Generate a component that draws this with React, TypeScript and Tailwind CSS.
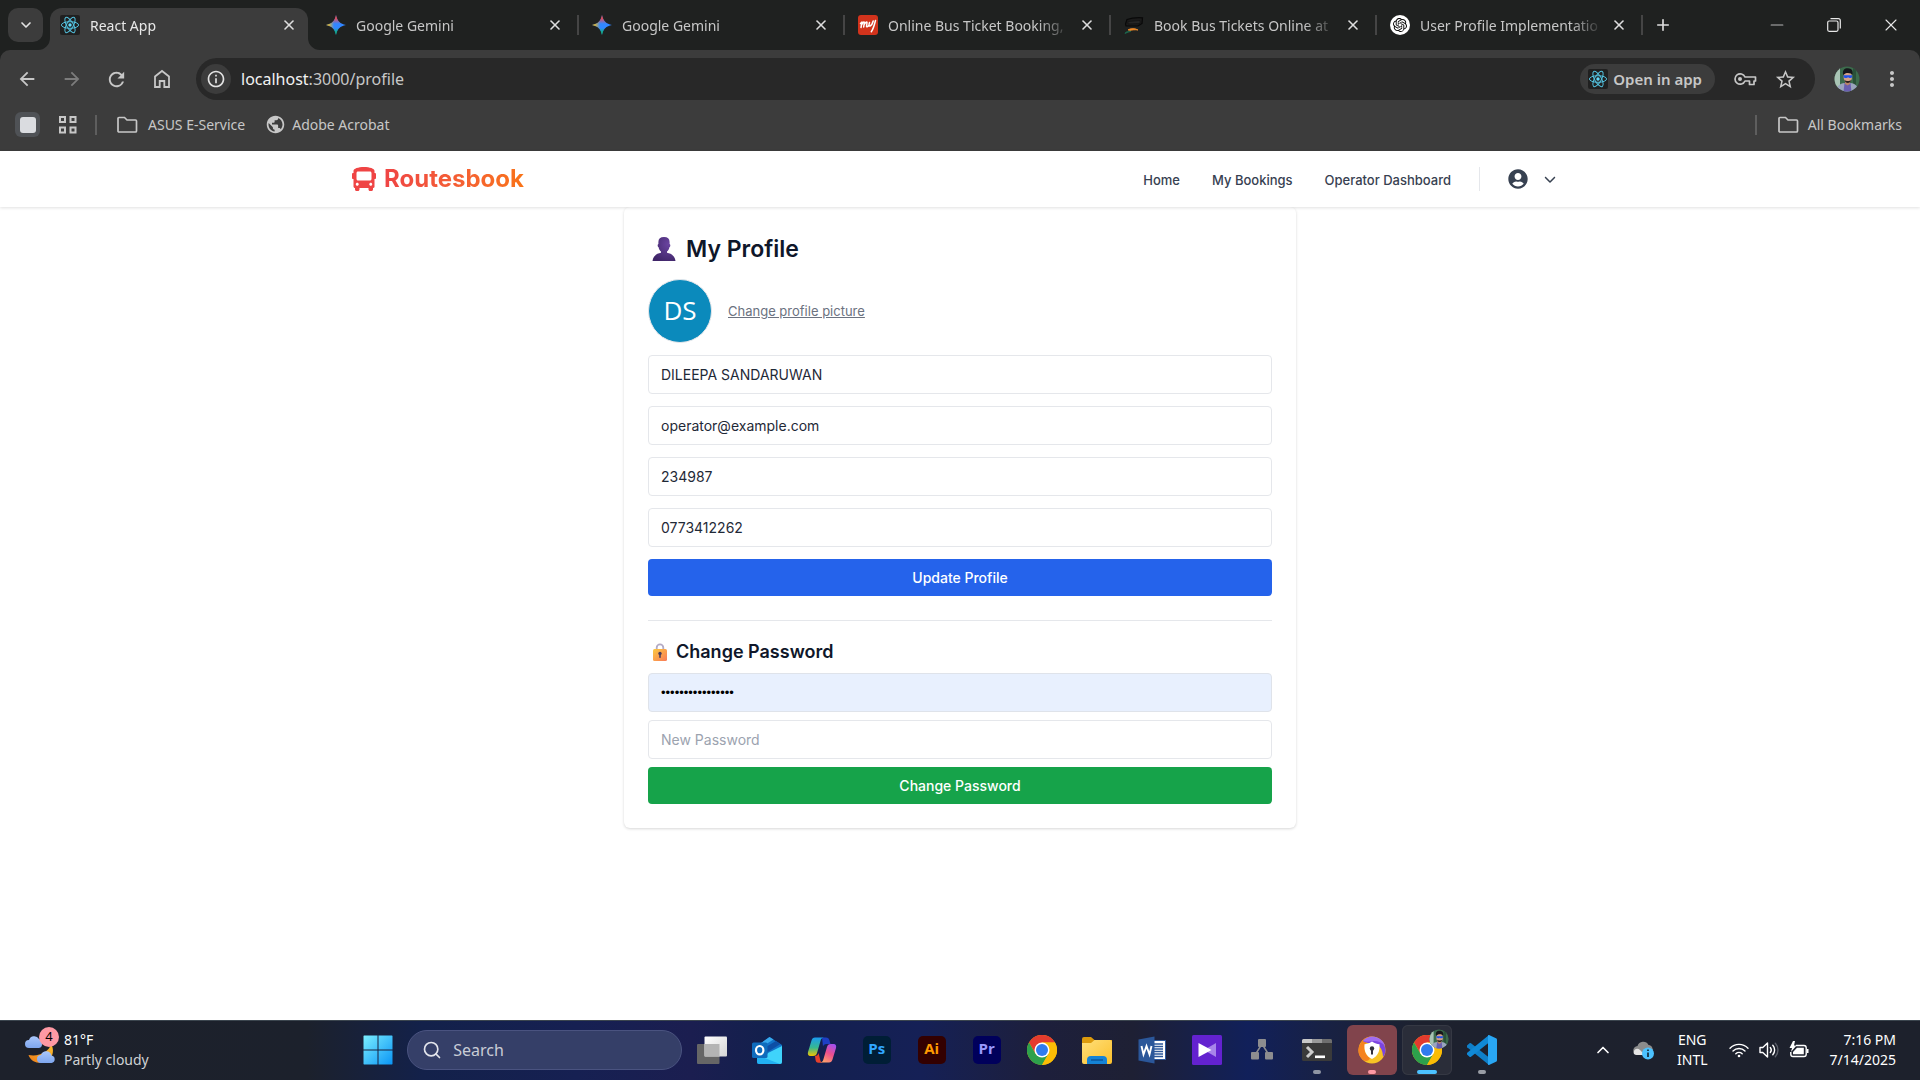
import React, { useState } from "react";
import { Minus, X, Plus, ChevronDown, ChevronUp, Search } from "lucide-react";
import { FaBus, FaUserCircle } from "react-icons/fa";
import { FaChevronDown } from "react-icons/fa6";
import { SiOpenai } from "react-icons/si";
import { MdArrowBack, MdArrowForward, MdRefresh, MdInfoOutline, MdStarOutline, MdMoreVert, MdPublic } from "react-icons/md";

/* ---------- favicons ---------- */

function ReactMark() {
  return (
    <svg viewBox="0 0 20 20" className="size-5 shrink-0" aria-hidden="true">
      <rect width="20" height="20" rx="2" fill="#202020" />
      <g fill="none" stroke="#53c1de" strokeWidth="1">
        <ellipse cx="10" cy="10" rx="8.6" ry="3.3" />
        <ellipse cx="10" cy="10" rx="8.6" ry="3.3" transform="rotate(60 10 10)" />
        <ellipse cx="10" cy="10" rx="8.6" ry="3.3" transform="rotate(120 10 10)" />
      </g>
      <circle cx="10" cy="10" r="1.7" fill="#61dafb" />
    </svg>
  );
}

function GeminiMark({ id }: { id: string }) {
  const star = "M10 0c.9 5.600 4.400 9.100 10 10-5.600.9-9.100 4.400-10 10-.9-5.600-4.400-9.100-10-10C5.600 9.100 9.100 5.600 10 0z";
  return (
    <svg viewBox="0 0 20 20" className="size-5 shrink-0" aria-hidden="true">
      <defs>
        <linearGradient id={id + "r"} x1="10" y1="0" x2="10" y2="11" gradientUnits="userSpaceOnUse">
          <stop offset="0.25" stopColor="#f94543" />
          <stop offset="0.8" stopColor="#f94543" stopOpacity="0" />
        </linearGradient>
        <linearGradient id={id + "y"} x1="0" y1="10" x2="10" y2="10" gradientUnits="userSpaceOnUse">
          <stop offset="0.2" stopColor="#fabc12" />
          <stop offset="0.8" stopColor="#fabc12" stopOpacity="0" />
        </linearGradient>
        <linearGradient id={id + "g"} x1="10" y1="20" x2="10" y2="10" gradientUnits="userSpaceOnUse">
          <stop offset="0.2" stopColor="#08b962" />
          <stop offset="0.7" stopColor="#08b962" stopOpacity="0" />
        </linearGradient>
      </defs>
      <path d={star} fill="#3186ff" />
      <path d={star} fill={`url(#${id}g)`} />
      <path d={star} fill={`url(#${id}r)`} />
      <path d={star} fill={`url(#${id}y)`} />
    </svg>
  );
}

function MyMark() {
  return (
    <svg viewBox="0 0 20 20" className="size-5 shrink-0" aria-hidden="true">
      <rect width="20" height="20" rx="3" fill="#d2331c" />
      <path
        d="M2.500 8.500 4 7l-1 5.500M3.800 9.500C5 7 6.500 6 6.300 8l-.6 4M6.300 9.500c1.200-2.500 3-3.500 2.700-1.500l-.5 3c0 1.300 1.200 1 2-.5M11.500 7.500c-.8 2.500-.6 4 .6 3.500 1.400-.6 2.400-2.500 3.100-5M17.500 5.500c-1 4-2.500 9-4.200 11.200"
        fill="none"
        stroke="#fff"
        strokeWidth="1.500"
        strokeLinecap="round"
        strokeLinejoin="round"
      />
    </svg>
  );
}

function BusSeatMark() {
  return (
    <svg viewBox="0 0 20 20" className="size-5 shrink-0" aria-hidden="true">
      <path d="M1.500 9 3 4.500C7 3 13 2.500 18.500 2.800L18 8.500 14 11 2 11z" fill="#1b1b1b" stroke="#090909" strokeWidth="1.200" />
      <path d="M4 6.500 16 5.500v3L4 9z" fill="#262626" stroke="#111" strokeWidth=".7" />
      <path d="M4 14.800c3-1.600 7-1.600 10 .2-3-.4-6-.2-8.500.8z" fill="#f28c28" stroke="#f28c28" strokeWidth=".8" />
      <path d="M1 18.500c.5-1.500 2-2.500 6-2.200-2 .6-4 1.200-6 2.200z" fill="#1c6b50" stroke="#1c6b50" strokeWidth=".7" />
    </svg>
  );
}

function ChatMark() {
  return (
    <span className="flex size-5 shrink-0 items-center justify-center rounded-full bg-white">
      <SiOpenai className="size-3.5 text-black" />
    </span>
  );
}

/* ---------- browser icons ---------- */

function FolderLine() {
  return (
    <svg viewBox="0 0 22 18" className="h-[18px] w-[22px]" aria-hidden="true">
      <path d="M2 14.500v-12a1 1 0 0 1 1-1h5.500L11 4h8.500a1 1 0 0 1 1 1v10a1 1 0 0 1-1 1H3a1 1 0 0 1-1-1z" fill="none" stroke="#c7c7c7" strokeWidth="1.700" />
    </svg>
  );
}

function HomeLine() {
  return (
    <svg viewBox="0 0 20 20" className="size-5" aria-hidden="true">
      <path d="M3 18V7.500L10 2l7 5.500V18h-4.700v-6H7.700v6z" fill="none" stroke="#c7c7c7" strokeWidth="1.800" />
    </svg>
  );
}

function KeyLine() {
  return (
    <svg viewBox="0 0 24 14" className="h-3.5 w-6" aria-hidden="true">
      <path d="M12 5h10.500v4H21v3.500h-4.500V9H12a5.200 5.200 0 1 1 0-4z" fill="none" stroke="#c7c7c7" strokeWidth="1.700" strokeLinejoin="round" />
      <circle cx="7" cy="7" r="2" fill="#c7c7c7" />
    </svg>
  );
}

function Portrait({ size }: { size: "md" | "sm" }) {
  return (
    <svg viewBox="0 0 26 26" className={size === "md" ? "size-[26px]" : "size-5"} aria-hidden="true">
      <defs>
        <clipPath id={"portrait" + size}>
          <circle cx="13" cy="13" r="12.500" />
        </clipPath>
      </defs>
      <g clipPath={`url(#portrait${size})`}>
        <rect width="26" height="26" fill="#3c6b4c" />
        <rect x="0" width="6" height="26" fill="#a9c4b5" />
        <rect x="19" width="3" height="26" fill="#2a5039" />
        <path d="M2 26c0-6 4-8.500 8.500-9h6c4.500.5 8 3 8 9z" fill="#9aa5bd" />
        <path d="M10.500 17h6l1 9h-8z" fill="#6a5fb0" />
        <path d="M11 14h5v4l-2.500 1.500L11 18z" fill="#b98468" />
        <ellipse cx="13.800" cy="11" rx="4.200" ry="5.800" fill="#d4a187" />
        <path d="M10.500 14c.6 4 6 4 6.700 0-1.500 1.300-5.200 1.300-6.700 0z" fill="#2a2020" />
        <path d="M9.200 9C8 3.500 11 2 14 2.200c3.500.1 5.500 2.500 4.400 6.800-1-2.500-7-3-9.200 0z" fill="#15171a" />
        <path d="M9.600 9.300h8.600v1.200c0 2-3.600 2-4.100.4-.6 1.600-4.500 1.600-4.500-.4z" fill="#2352e8" />
      </g>
    </svg>
  );
}

/* ---------- browser chrome ---------- */

const tabs = [
  { title: "React App", icon: <ReactMark />, active: true },
  { title: "Google Gemini", icon: <GeminiMark id="gema" /> },
  { title: "Google Gemini", icon: <GeminiMark id="gemb" /> },
  { title: "Online Bus Ticket Booking,", icon: <MyMark /> },
  { title: "Book Bus Tickets Online at", icon: <BusSeatMark /> },
  { title: "User Profile Implementatio", icon: <ChatMark /> },
];

function TabStrip() {
  return (
    <div className="flex h-[50px] items-center bg-[#1f2120]">
      <button aria-label="Search tabs" className="mr-1 ml-2 flex h-[34px] w-[35px] shrink-0 items-center justify-center rounded-[10px] bg-[#3c3c3c] text-[#e3e3e3]">
        <ChevronDown className="size-4" strokeWidth={2.5} />
      </button>
      <div role="tablist" className="flex min-w-0 flex-1 self-stretch">
        {tabs.map((tab, i) => (
          <div key={i} className="relative flex max-w-[266px] min-w-0 flex-1 items-center pr-3.5 pl-[13px]">
            {tab.active && (
              <div className="absolute top-2 right-[5px] bottom-0 left-[3px] rounded-t-xl bg-[#3c3c3c]">
                <svg viewBox="0 0 12 12" className="absolute bottom-0 -left-3 size-3" aria-hidden="true">
                  <path d="M12 0v12H0A12 12 0 0 0 12 0z" fill="#3c3c3c" />
                </svg>
                <svg viewBox="0 0 12 12" className="absolute -right-3 bottom-0 size-3" aria-hidden="true">
                  <path d="M0 0v12h12A12 12 0 0 1 0 0z" fill="#3c3c3c" />
                </svg>
              </div>
            )}
            <button role="tab" aria-selected={!!tab.active} className="relative flex min-w-0 flex-1 items-center gap-2.5 text-left">
              {tab.icon}
              <span
                className={
                  "flex-1 overflow-hidden text-[14px] whitespace-nowrap [mask-image:linear-gradient(to_right,black_82%,transparent)] " +
                  (tab.active ? "text-[#e8e8e8]" : "text-[#c7c7c7]")
                }
              >
                {tab.title}
              </span>
            </button>
            <button aria-label={"Close " + tab.title} className="relative ml-1.5 flex size-5 shrink-0 items-center justify-center text-[#dedede]">
              <X className="size-4" strokeWidth={2.4} />
            </button>
            {!tab.active && <span className="absolute top-[15px] right-0 h-5 w-0.5 bg-[#454545]" />}
          </div>
        ))}
        <button aria-label="New tab" className="flex w-10 shrink-0 items-center justify-center text-[#dedede]">
          <Plus className="size-[18px]" strokeWidth={2.2} />
        </button>
      </div>
      <div className="flex shrink-0 self-stretch">
        <button aria-label="Minimize" className="flex w-[57px] items-center justify-center text-[#b5b5b5]">
          <Minus className="size-5" strokeWidth={1.4} />
        </button>
        <button aria-label="Restore" className="flex w-[57px] items-center justify-center">
          <svg viewBox="0 0 14 14" className="size-3.5" fill="none" stroke="#e8e8e8" strokeWidth="1.200" aria-hidden="true">
            <rect x=".7" y="3" width="10.300" height="10.300" rx="1.500" />
            <path d="M3.500.7h7.800a2 2 0 0 1 2 2v7.800" />
          </svg>
        </button>
        <button aria-label="Close window" className="flex w-[58px] items-center justify-center text-[#e8e8e8]">
          <X className="size-5" strokeWidth={1.3} />
        </button>
      </div>
    </div>
  );
}

function Toolbar() {
  return (
    <div className="flex h-[58px] items-center rounded-t-[10px] bg-[#3c3c3c] text-[#c7c7c7]">
      <div className="flex items-center pl-1">
        <button aria-label="Back" className="flex w-[45px] justify-center"><MdArrowBack className="size-[22px]" /></button>
        <button aria-label="Forward" className="flex w-[45px] justify-center text-[#7c7c7c]"><MdArrowForward className="size-[22px]" /></button>
        <button aria-label="Reload" className="flex w-[45px] justify-center"><MdRefresh className="size-[23px]" /></button>
        <button aria-label="Home" className="flex w-[45px] justify-center"><HomeLine /></button>
      </div>
      <div className="ml-3 flex h-[42px] flex-1 items-center rounded-full bg-[#282828] pr-[18px] pl-[5px]">
        <button aria-label="Site information" className="flex size-[30px] items-center justify-center rounded-full bg-[#3c3c3c] text-[#e3e3e3]">
          <MdInfoOutline className="size-5" />
        </button>
        <div className="relative ml-2.5 flex flex-1 items-center text-[16px]">
          <span aria-hidden="true" className="text-[#c7c7c7]">
            <span className="text-[#f2f2f2]">localhost</span>:3000/profile
          </span>
          <input aria-label="Address" defaultValue="localhost:3000/profile" className="absolute inset-0 w-full bg-transparent text-transparent outline-none" />
        </div>
        <button className="flex h-[30px] items-center gap-[5px] rounded-full bg-[#3c3c3c] pr-[13px] pl-2 text-[15px] font-semibold text-[#c7c7c7]">
          <ReactMark />
          Open in app
        </button>
        <button aria-label="Passwords" className="ml-[18px]"><KeyLine /></button>
        <button aria-label="Bookmark this page" className="ml-[17px]"><MdStarOutline className="size-[23px]" /></button>
      </div>
      <button aria-label="Profile" className="ml-[19px]"><Portrait size="md" /></button>
      <button aria-label="Browser menu" className="mr-4 ml-5"><MdMoreVert className="size-6" /></button>
    </div>
  );
}

function Bookmarks() {
  return (
    <div className="flex h-[43px] items-center bg-[#3c3c3c] pr-[18px] pb-2.5 pl-[15px] text-[14px] text-[#c7c7c7]">
      <button aria-label="Tab group" className="flex size-[25px] items-center justify-center rounded-md bg-[#4f5256]">
        <span className="size-4 rounded-[3px] bg-[#dadce0]" />
      </button>
      <button aria-label="Apps" className="ml-[18px]">
        <svg viewBox="0 0 20 20" className="size-5" fill="none" stroke="#c7c7c7" strokeWidth="2" aria-hidden="true">
          <rect x="2" y="2" width="5" height="5" />
          <rect x="12.500" y="2" width="5" height="5" />
          <rect x="2" y="12.500" width="5" height="5" />
          <rect x="12.500" y="12.500" width="5" height="5" />
        </svg>
      </button>
      <span className="ml-[17px] h-5 w-0.5 bg-[#5e5e5e]" />
      <a href="#asus" className="ml-[19px] flex items-center gap-2.5"><FolderLine />ASUS E-Service</a>
      <a href="#acrobat" className="ml-5 flex items-center gap-1.5"><MdPublic className="size-[21px]" />Adobe Acrobat</a>
      <span className="ml-auto h-5 w-0.5 bg-[#5e5e5e]" />
      <button className="ml-5 flex items-center gap-[9px]"><FolderLine />All Bookmarks</button>
    </div>
  );
}

/* ---------- site ---------- */

function SiteHeader() {
  return (
    <header className="relative z-10 bg-white font-['Inter',sans-serif] shadow-[0_1px_3px_rgba(0,0,0,0.12)]">
      <div className="mx-auto flex h-14 max-w-7xl items-center justify-between px-8">
        <a href="#home" className="flex items-center gap-2">
          <FaBus className="size-6 text-[#ef4444]" />
          <span className="bg-gradient-to-r from-[#ef4444] to-[#f97316] bg-clip-text text-[24px] font-bold text-transparent">Routesbook</span>
        </a>
        <nav className="flex items-center text-[13px] font-medium text-[#374151]">
          <div className="flex gap-8 pt-[3px]">
            <a href="#home">Home</a>
            <a href="#bookings">My Bookings</a>
            <a href="#dashboard">Operator Dashboard</a>
          </div>
          <span className="ml-7 h-6 w-px bg-[#e5e7eb]" />
          <button aria-label="Account menu" className="ml-7 flex items-center gap-4 pr-3">
            <FaUserCircle className="size-5" />
            <FaChevronDown className="size-3" />
          </button>
        </nav>
      </div>
    </header>
  );
}

function PersonGlyph() {
  return (
    <svg viewBox="0 0 24 24" className="size-6" role="img" aria-label="Person">
      <defs>
        <radialGradient id="person" cx=".7" cy=".3" r=".8">
          <stop offset="0" stopColor="#6a44a0" />
          <stop offset="1" stopColor="#3f2568" />
        </radialGradient>
      </defs>
      <path d="M12 0c3.700 0 5.600 1.800 5.600 5v2c1 .2 1 2.800-.2 3.200-.4 2-1.100 3.300-2.400 4.300v1.300c4.600.7 8 3.600 8.500 8.200H.5C1 19.400 4.400 16.500 9 15.800v-1.300c-1.300-1-2-2.300-2.400-4.300C5.400 9.800 5.400 7.200 6.400 7V5C6.400 1.800 8.300 0 12 0z" fill="url(#person)" />
    </svg>
  );
}

function LockGlyph() {
  return (
    <svg viewBox="0 0 14 18" className="h-[18px] w-3.5" role="img" aria-label="Locked">
      <defs>
        <linearGradient id="lock" x1="0" y1="0" x2="1" y2="1">
          <stop offset="0" stopColor="#fcc93f" />
          <stop offset="1" stopColor="#f97a58" />
        </linearGradient>
      </defs>
      <path d="M3.700 8V4.700a3.300 3.300 0 0 1 6.600 0V8" fill="none" stroke="#b3aac4" strokeWidth="1.800" />
      <rect y="6" width="14" height="12" rx="1.500" fill="url(#lock)" />
      <circle cx="7" cy="10.500" r="1.700" fill="#4b3b5c" />
      <rect x="6.200" y="11" width="1.600" height="4" rx=".8" fill="#4b3b5c" />
    </svg>
  );
}

const fieldClass = "block w-full rounded border border-[#e5e7eb] px-3 py-2 text-[14px] leading-[21px] text-[#1f2937] outline-none placeholder:text-[#9ca3af]";

function ProfilePage() {
  const [form, setForm] = useState({
    name: "DILEEPA SANDARUWAN",
    email: "operator@example.com",
    id: "234987",
    phone: "0773412262",
  });
  const [current, setCurrent] = useState("samplepassword16");
  const [next, setNext] = useState("");
  const fields: { key: keyof typeof form; label: string }[] = [
    { key: "name", label: "Full name" },
    { key: "email", label: "Email" },
    { key: "id", label: "ID number" },
    { key: "phone", label: "Phone" },
  ];

  return (
    <main className="flex-1 bg-white font-['Inter',sans-serif]">
      <div className="mx-auto max-w-2xl rounded-md bg-white p-6 shadow-[0_1px_3px_rgba(0,0,0,0.16)]">
        <form className="space-y-3" onSubmit={(e) => e.preventDefault()}>
          <h1 className="flex items-center gap-2.5 pl-1 text-[23px] leading-9 font-semibold text-[#0f172a]">
            <PersonGlyph />
            My Profile
          </h1>
          <div className="flex items-center gap-4">
            <div className="flex size-16 items-center justify-center rounded-full border border-[#e5e7eb] bg-[#0b8abc] pb-0.5 font-['Open_Sans',sans-serif] text-[26px] text-white">DS</div>
            <button type="button" className="pt-0.5 text-[13px] text-[#6b7280] underline">Change profile picture</button>
          </div>
          {fields.map((f) => (
            <input
              key={f.key}
              aria-label={f.label}
              value={form[f.key]}
              onChange={(e) => setForm({ ...form, [f.key]: e.target.value })}
              className={fieldClass}
            />
          ))}
          <button className="block w-full rounded bg-[#2563eb] py-2 text-[14px] leading-[21px] font-medium text-white">Update Profile</button>
        </form>
        <hr className="mt-6 border-[#e5e7eb]" />
        <form className="mt-[17px] space-y-2" onSubmit={(e) => e.preventDefault()}>
          <h2 className="flex items-center gap-[9px] pl-[5px] text-[18px] leading-[27px] font-semibold text-[#0f172a]">
            <LockGlyph />
            Change Password
          </h2>
          <input
            type="password"
            aria-label="Current Password"
            value={current}
            onChange={(e) => setCurrent(e.target.value)}
            className="block h-[39px] w-full rounded border border-[#dfe3ea] bg-[#e8f0fe] px-3 font-['Liberation_Sans',sans-serif] text-[13px] text-black outline-none"
          />
          <input
            type="password"
            aria-label="New Password"
            placeholder="New Password"
            value={next}
            onChange={(e) => setNext(e.target.value)}
            className={fieldClass}
          />
          <button className="block w-full rounded bg-[#16a34a] py-2 text-[14px] leading-[21px] font-medium text-white">Change Password</button>
        </form>
      </div>
    </main>
  );
}

/* ---------- taskbar icons ---------- */

function WeatherIcon() {
  return (
    <svg viewBox="0 0 30 30" className="size-[30px]" aria-hidden="true">
      <defs>
        <linearGradient id="moon" x1="1" y1="0" x2="0" y2="1">
          <stop offset="0" stopColor="#fbc02d" />
          <stop offset="1" stopColor="#ee7d1a" />
        </linearGradient>
        <linearGradient id="cloud" x1="0" y1="0" x2="0" y2="1">
          <stop offset="0" stopColor="#a9c7fb" />
          <stop offset="1" stopColor="#7ea6ee" />
        </linearGradient>
      </defs>
      <path d="M26 9c5 8 0 19-10 19-6 0-11-3-12.500-8C14 22 24 17 26 9z" fill="url(#moon)" />
      <path d="M4 13a4 4 0 0 1 0-8 5.500 5.500 0 0 1 10-1c3 0 5 9 0 9z" fill="url(#cloud)" />
      <path d="M16 28a4 4 0 0 1 0-8 5.500 5.500 0 0 1 10.500 0.500 3.800 3.800 0 0 1 0 7.500z" fill="url(#cloud)" />
    </svg>
  );
}

function StartIcon() {
  return (
    <svg viewBox="0 0 30 30" className="size-[30px]" aria-hidden="true">
      <defs>
        <linearGradient id="win" x1="0" y1="0" x2="30" y2="30" gradientUnits="userSpaceOnUse">
          <stop offset="0" stopColor="#7df0ff" />
          <stop offset="1" stopColor="#0893f5" />
        </linearGradient>
      </defs>
      <path d="M1 .5h13.500v14H.5V1zM15.500.5H29l.5.5v13.500h-14zM.5 15.500h14v14H1l-.5-.5zM15.500 15.500h14V29l-.5.5H15.500z" fill="url(#win)" />
    </svg>
  );
}

function TaskViewIcon() {
  return (
    <svg viewBox="0 0 30 30" className="size-[30px]" aria-hidden="true">
      <defs>
        <linearGradient id="tv" x1="0" y1="0" x2="1" y2="1">
          <stop offset="0" stopColor="#fff" />
          <stop offset="1" stopColor="#d5d5d5" />
        </linearGradient>
      </defs>
      <rect y="9" width="22.500" height="20" rx="1" fill="#666" />
      <rect x="7.500" y="1.500" width="22.500" height="20" rx="1" fill="url(#tv)" />
      <rect x="7.500" y="9" width="15" height="12.500" fill="#b4b4b4" />
    </svg>
  );
}

function OutlookIcon() {
  return (
    <svg viewBox="0 0 30 30" className="size-[30px]" aria-hidden="true">
      <path d="M5 11 17.500 2 30 10v17a2 2 0 0 1-2 2H7a2 2 0 0 1-2-2z" fill="#1272c8" />
      <path d="M7 9.500 17.500 2l4 2.500L8 13z" fill="#37a9ee" />
      <path d="M12 13 24 6l4.500 3L14 18z" fill="#0d4fa6" />
      <path d="M30 11v16a2 2 0 0 1-2 2H8l8-11z" fill="#3fd3fb" />
      <path d="M5 20 28 29H7a2 2 0 0 1-2-2z" fill="#22b1f2" />
      <rect y="7.500" width="15.500" height="15.500" rx="1.500" fill="#0f6cbd" />
      <ellipse cx="7.700" cy="15.200" rx="3.700" ry="4.200" fill="none" stroke="#fff" strokeWidth="2.200" />
    </svg>
  );
}

function CopilotIcon() {
  return (
    <svg viewBox="0 0 30 30" className="size-[30px]" aria-hidden="true">
      <defs>
        <linearGradient id="cpa" x1="0" y1="0" x2="0" y2="1">
          <stop offset="0" stopColor="#1a9cf0" />
          <stop offset=".55" stopColor="#37b98f" />
          <stop offset="1" stopColor="#f2c500" />
        </linearGradient>
        <linearGradient id="cpb" x1=".8" y1="0" x2=".3" y2="1">
          <stop offset="0" stopColor="#a050f0" />
          <stop offset=".5" stopColor="#ee4f8c" />
          <stop offset="1" stopColor="#ffa06a" />
        </linearGradient>
      </defs>
      <path d="M15 2.500h4c2 0 3 1 3.500 3l1 3.500h-4c-2 0-3 1-3.500 2.500z" fill="#1d3fc4" />
      <path d="M8 2.500h9c-2 0-3 1.500-3.500 3.500L10 18c-.6 2-1.500 3-4 3H3.500C1 21 .5 19 1 17L4.500 5.500c.6-2 1.600-3 3.500-3z" fill="url(#cpa)" />
      <path d="M8 21c2 0 3-1 3.500-3l2 8c.5 1.200 1.500 1.800 3 1.800h-5c-2 0-2.600-1-3-3z" fill="#e6402c" />
      <path d="M22 27.500h-9c2 0 3-1.500 3.500-3.500L20 12c.6-2 1.500-3 4-3h2.500c2.500 0 3 2 2.500 4l-3.500 11.500c-.6 2-1.600 3-3.500 3z" fill="url(#cpb)" />
    </svg>
  );
}

function ChromeIcon() {
  return (
    <svg viewBox="0 0 30 30" className="size-[30px]" aria-hidden="true">
      <circle cx="15" cy="15" r="15" fill="#fbbc05" />
      <path d="M15 7.500h13a15 15 0 0 0-26 0l6.500 11z" fill="#e33b2e" />
      <path d="M2 7.500A15 15 0 0 0 15 30l6.500-11.300L15 22 8.500 18.700z" fill="#2da14c" />
      <path d="M15 7.500h13A15 15 0 0 1 15 30l6.500-11.300z" fill="#fbbc05" />
      <circle cx="15" cy="15" r="7.500" fill="#fff" />
      <circle cx="15" cy="15" r="6" fill="#2f7bee" />
    </svg>
  );
}

function ExplorerIcon() {
  return (
    <svg viewBox="0 0 30 30" className="size-[30px]" aria-hidden="true">
      <defs>
        <linearGradient id="fol" x1="0" y1="0" x2="1" y2="1">
          <stop offset="0" stopColor="#ffdf7a" />
          <stop offset="1" stopColor="#fbc02c" />
        </linearGradient>
      </defs>
      <path d="M0 4a2 2 0 0 1 2-2h7l3.500 3H30v8H0z" fill="#dc9a0c" />
      <path d="M0 8h9l3.500-3H28a2 2 0 0 1 2 2v20a2 2 0 0 1-2 2H2a2 2 0 0 1-2-2z" fill="url(#fol)" />
      <path d="M5 29v-4a4 4 0 0 1 4-4h12a4 4 0 0 1 4 4v4z" fill="#1583d6" />
      <path d="M9 25h12" stroke="#0b569c" strokeWidth="1.500" />
    </svg>
  );
}

function WordIcon() {
  return (
    <svg viewBox="0 0 30 30" className="size-[30px]" aria-hidden="true">
      <path d="M14 5.500h14.500v19H14z" fill="#fff" stroke="#2b579a" strokeWidth="1" />
      <path d="M17 9h9M17 11.500h9M17 14h9M17 16.500h9M17 19h9M17 21.500h9" stroke="#2b579a" strokeWidth="1.300" />
      <path d="M1.500 4.500 17.500 1.500v27L1.500 25.500z" fill="#2b579a" />
      <path d="m4.500 11 2 8.500L9.500 11l3 8.500 2-8.500" fill="none" stroke="#fff" strokeWidth="1.900" />
    </svg>
  );
}

function VideoIcon() {
  return (
    <svg viewBox="0 0 30 30" className="size-[30px]" aria-hidden="true">
      <rect width="30" height="30" rx="1.500" fill="#6322cf" />
      <path d="M24 8v14L12 15z" fill="#a884ea" />
      <path d="M6.500 8v14L19.500 15z" fill="#fff" />
    </svg>
  );
}

function NodesIcon() {
  return (
    <svg viewBox="0 0 30 30" className="size-[30px]" aria-hidden="true">
      <path d="m15 9-7 11M15 9l7 11" stroke="#8d8d8f" strokeWidth="1.500" />
      <rect x="11" y="4" width="8" height="8" rx="1" fill="#8d8d8f" />
      <rect x="4" y="17" width="8" height="7.500" rx="1" fill="#8d8d8f" />
      <rect x="18" y="17" width="8" height="7.500" rx="1" fill="#8d8d8f" />
    </svg>
  );
}

function TerminalIcon() {
  return (
    <svg viewBox="0 0 30 30" className="size-[30px]" aria-hidden="true">
      <rect y="4" width="30" height="22" rx="1.500" fill="#3a3a3a" />
      <path d="M0 5.500A1.500 1.500 0 0 1 1.500 4H10v4H0z" fill="#c8c8c8" />
      <path d="M10 4h10v4H10z" fill="#9a9a9a" />
      <path d="M20 4h8.500A1.500 1.500 0 0 1 30 5.500V8H20z" fill="#6f6f6f" />
      <path d="m5 12 5 5-5 5" fill="none" stroke="#ccc" strokeWidth="3" />
      <path d="M13 21.800h10" stroke="#fff" strokeWidth="2.600" />
    </svg>
  );
}

function ShieldIcon() {
  return (
    <svg viewBox="0 0 30 30" className="size-[30px]" aria-hidden="true">
      <circle cx="15" cy="15" r="13.500" fill="#f7c325" />
      <path d="M15 1.500A13.500 13.500 0 0 0 6 25c3 2 6 1 7-2C8 20 6 14 9 8c2-3 4-5 6-6.500z" fill="#f58220" />
      <path d="M6 6A13.500 13.500 0 0 1 28.500 15c0 3-1 5-2.500 7 0-8-4-14-13-14-3 0-5-.5-7-2z" fill="#7b45e0" />
      <path d="M6 6c2-3 6-4.500 9-4.500 6 0 11 3.500 13 9-3-3-8-5-12-4.500-4 1-7 1-10 0z" fill="#a06cf2" />
      <path d="M15 6.500c3 2 5 2.500 7.500 2.700C23 16 21 21 15 24c-6-3-8-8-7.500-14.800C10 9 12 8.500 15 6.500z" fill="#fff" />
      <circle cx="15" cy="13.500" r="2.200" fill="#30303c" />
      <path d="M14 14h2v5.500h-2z" fill="#30303c" />
    </svg>
  );
}

function CodeIcon() {
  return (
    <svg viewBox="0 0 30 30" className="size-[30px]" aria-hidden="true">
      <path d="M0 10.500 2.500 8.200a1.200 1.200 0 0 1 1.500 0L22 22.500V30L1 13a1.500 1.500 0 0 1-1-2.500z" fill="#0f7fc8" />
      <path d="M0 19.500 2.500 21.800a1.200 1.200 0 0 0 1.500 0L22 7.500V0L.5 17.500a1.500 1.500 0 0 0-.5 2z" fill="#1089d6" />
      <path d="M22 0l7 3.200a1.700 1.700 0 0 1 1 1.500v20.600a1.700 1.700 0 0 1-1 1.500L22 30c-.8 0-1-.5-1-1V1c0-.5.200-1 1-1z" fill="#29a7f4" />
    </svg>
  );
}

function AdobeTile({ label, className }: { label: string; className: string }) {
  return (
    <span className={"flex size-7 items-center justify-center rounded-[5px] pb-0.5 font-['Open_Sans',sans-serif] text-[15px] leading-none font-bold " + className}>{label}</span>
  );
}

type TaskbarApp = { name: string; icon: React.ReactNode; cell?: string; mark?: string };

const apps: TaskbarApp[] = [
  { name: "Task view", icon: <TaskViewIcon /> },
  { name: "Outlook", icon: <OutlookIcon /> },
  { name: "Copilot", icon: <CopilotIcon /> },
  { name: "Photoshop", icon: <AdobeTile label="Ps" className="bg-[#001e36] text-[#31a8ff]" /> },
  { name: "Illustrator", icon: <AdobeTile label="Ai" className="bg-[#330000] text-[#ff9a00]" /> },
  { name: "Premiere Pro", icon: <AdobeTile label="Pr" className="bg-[#00005b] text-[#9999ff]" /> },
  { name: "Chrome", icon: <ChromeIcon /> },
  { name: "File Explorer", icon: <ExplorerIcon /> },
  { name: "Word", icon: <WordIcon /> },
  { name: "Video editor", icon: <VideoIcon /> },
  { name: "Network", icon: <NodesIcon /> },
  { name: "Terminal", icon: <TerminalIcon />, mark: "w-2 bg-[#8f95a3]" },
  { name: "Secure browser", icon: <ShieldIcon />, cell: "bg-[#81444c]", mark: "w-2 bg-[#ff99a4]" },
  { name: "Chrome profile", icon: <ChromeIcon />, cell: "bg-[#2a2d39] ring-1 ring-inset ring-[#353843]", mark: "w-5 bg-[#4cc2ff]" },
  { name: "Code editor", icon: <CodeIcon />, mark: "w-2 bg-[#999da5]" },
];

function Taskbar() {
  return (
    <footer className="grid h-[60px] shrink-0 grid-cols-[17fr_auto_20fr] items-center border-t border-[#3b454e] bg-[linear-gradient(to_right,#1d212b_0%,#1c212c_16%,#13214a_22%,#162052_30%,#1b1e50_36%,#13204d_40%,#152056_48%,#1d1f3c_54%,#1e2034_59%,#11205a_65%,#182144_69%,#1d212e_74%,#1d212c_100%)] pb-0.5 text-[14px] text-white">
      <button className="flex items-center gap-[9px] justify-self-start pl-[25px] text-left">
        <span className="relative">
          <WeatherIcon />
          <span className="absolute -top-2 left-3.5 flex size-5 items-center justify-center rounded-full bg-[#ff99a4] text-[13px] text-black">4</span>
        </span>
        <span className="leading-5">
          <span className="block">81°F</span>
          <span className="block text-[#cfd1d4]">Partly cloudy</span>
        </span>
      </button>
      <div className="flex items-center">
        <button aria-label="Start" className="flex w-[58px] justify-center"><StartIcon /></button>
        <label className="mr-0.5 flex h-10 w-[275px] items-center rounded-full border border-[#4a5380] bg-[#353f68] pl-3.5">
          <Search className="size-5 text-[#e3e5ec]" strokeWidth={2} />
          <input aria-label="Search" placeholder="Search" className="ml-[11px] min-w-0 flex-1 bg-transparent text-[16px] outline-none placeholder:text-[#c9ccd6]" />
        </label>
        {apps.map((app) => (
          <button key={app.name} aria-label={app.name} className="flex h-[50px] w-[55px] justify-center">
            <span className={"relative flex size-[50px] items-center justify-center rounded-md " + (app.cell ?? "")}>
              {app.icon}
              {app.name === "Chrome profile" && (
                <span className="absolute top-1 right-[3px] flex"><Portrait size="sm" /></span>
              )}
              {app.mark && <span className={"absolute bottom-px h-1 rounded-full " + app.mark} />}
            </span>
          </button>
        ))}
      </div>
      <div className="flex items-center justify-self-end pr-6">
        <button aria-label="Hidden icons"><ChevronUp className="size-5" strokeWidth={2} /></button>
        <button aria-label="Cloud storage" className="ml-5">
          <svg viewBox="0 0 22 20" className="h-5 w-[22px]" aria-hidden="true">
            <path d="M5 15a4.500 4.500 0 0 1-.5-9A6 6 0 0 1 15.500 5 4.500 4.500 0 0 1 18 13z" fill="#8c8c8c" />
            <path d="M1 14c-1.500-4 3-7 6-4l5 5H4a4 4 0 0 1-3-1z" fill="#e4e4e4" />
            <circle cx="15" cy="13.500" r="6" fill="#4cc2ff" />
            <path d="M15 12.500v4.500M15 9.500v1.600" stroke="#10202c" strokeWidth="1.600" />
          </svg>
        </button>
        <button className="ml-[22px] text-center leading-5">
          <span className="block">ENG</span>
          <span className="block">INTL</span>
        </button>
        <button aria-label="Network, volume and battery" className="ml-[21px] flex items-center gap-2.5">
          <svg viewBox="0 0 20 16" className="h-4 w-5" fill="none" stroke="#fff" strokeWidth="1.400" strokeLinecap="round" aria-hidden="true">
            <path d="M1 6.200a12.500 12.500 0 0 1 18 0M4 9a8.500 8.500 0 0 1 12 0M6.800 11.700a4.600 4.600 0 0 1 6.400 0" />
            <circle cx="10" cy="14" r="1.300" fill="#fff" stroke="none" />
          </svg>
          <svg viewBox="0 0 20 18" className="h-[18px] w-5" fill="none" stroke="#fff" strokeWidth="1.400" strokeLinecap="round" strokeLinejoin="round" aria-hidden="true">
            <path d="M1 6.500h2.800L8.500 2v14l-4.700-4.500H1z" />
            <path d="M11.300 6.500a4 4 0 0 1 0 5M13.800 4.300a7 7 0 0 1 0 9.400" />
            <path d="M16.300 2.200a10 10 0 0 1 0 13.600" stroke="#5a5e68" />
          </svg>
          <svg viewBox="0 0 20 18" className="h-[18px] w-5" aria-hidden="true">
            <path d="M7 4.500h8a2.200 2.200 0 0 1 2.200 2.200v6.600a2.200 2.200 0 0 1-2.200 2.200H4a2.200 2.200 0 0 1-2.200-2.200V11" fill="none" stroke="#fff" strokeWidth="1.400" />
            <path d="M8 6.800h6.800v6.400H4V11z" fill="#fff" />
            <path d="M18 8h1.500v4H18z" fill="#fff" />
            <path d="M4 0 .5 7H3l-1 4 5.500-6.500H5L6 0z" fill="#fff" />
          </svg>
        </button>
        <button className="ml-[21px] text-right leading-5">
          <span className="block">7:16 PM</span>
          <span className="block">7/14/2025</span>
        </button>
      </div>
    </footer>
  );
}

export default function App() {
  return (
    <div className="flex min-h-screen flex-col bg-white font-['Noto_Sans','Open_Sans',sans-serif]">
      <div className="bg-[#1f2120]">
        <TabStrip />
        <Toolbar />
        <Bookmarks />
      </div>
      <SiteHeader />
      <ProfilePage />
      <Taskbar />
    </div>
  );
}
